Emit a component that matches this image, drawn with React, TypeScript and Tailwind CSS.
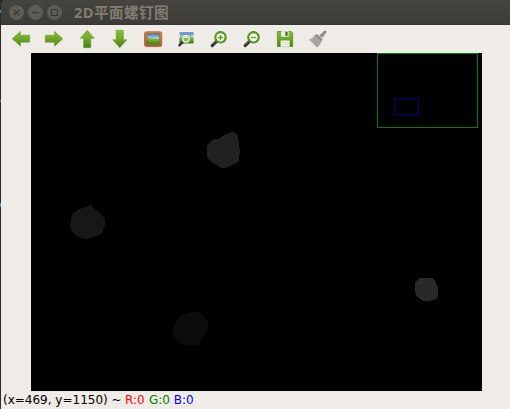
import type { ReactNode } from "react";

function Icon({ children }: { children: ReactNode }) {
  return (
    <svg width="24" height="24" viewBox="0 0 24 24" fill="none" className="shrink-0">
      {children}
    </svg>
  );
}

function Arrow({ d }: { d: string }) {
  return (
    <Icon>
      <path d={d} fill="url(#leaf)" stroke="#659b25" strokeWidth="0.5" strokeLinejoin="round" />
    </Icon>
  );
}

function Magnifier({ plus }: { plus?: boolean }) {
  return (
    <Icon>
      <path d="M10 13.8 5.2 18.6" stroke="#34362f" strokeWidth="3.1" strokeLinecap="round" />
      <path d="M8.8 14.2 5.6 17.4" stroke="#777970" strokeWidth="0.8" />
      <circle cx="13.5" cy="10.3" r="5.2" fill="#f5f8ef" stroke="#4b8a13" strokeWidth="2.1" />
      <circle cx="13.5" cy="10.3" r="5.2" stroke="#68a42b" strokeWidth="0.8" />
      <path d={plus ? "M11 10.5h5M13.5 8v5" : "M11 10.5h5"} stroke="#5f9e22" strokeWidth="1.3" />
    </Icon>
  );
}

function WindowButton({ d }: { d: string }) {
  return (
    <span className="flex size-[15px] items-center justify-center rounded-full bg-[#5e5c57]">
      <svg width="15" height="15" viewBox="0 0 15 15" fill="none" stroke="#393834" strokeWidth="1.1">
        <path d={d} />
      </svg>
    </span>
  );
}

function TitleBar() {
  return (
    <header className="flex h-[25px] items-center rounded-tl-[5px] border-b border-[#393733] bg-linear-to-b from-[#45443f] to-[#3c3b37] pl-2">
      <div className="flex gap-1">
        <WindowButton d="m5 5 5 5m0-5-5 5" />
        <WindowButton d="M4 7.5h7" />
        <WindowButton d="M4.5 4.5h6v6h-6z" />
      </div>
      <h1 className="ml-[12px] whitespace-nowrap font-['Open_Sans','Noto_Sans_CJK_SC',sans-serif] text-[14.6px] leading-6 font-bold tracking-[0.4px] text-[#817d74]">
        2D平面螺钉图
      </h1>
    </header>
  );
}

function Toolbar() {
  return (
    <nav className="flex h-7 items-center gap-[9px] pl-2">
      <svg width="0" height="0" className="absolute">
        <defs>
          <linearGradient id="leaf" x1="0" y1="3" x2="0" y2="21" gradientUnits="userSpaceOnUse">
            <stop stopColor="#8cbb3d" />
            <stop offset=".45" stopColor="#73a92c" />
            <stop offset="1" stopColor="#417c0b" />
          </linearGradient>
          <linearGradient id="sky" x1="0" y1="0" x2="0" y2="1">
            <stop stopColor="#4b7fc2" />
            <stop offset=".45" stopColor="#bcd5e9" />
            <stop offset="1" stopColor="#bcd5e9" />
          </linearGradient>
          <linearGradient id="hill" x1="0" y1="0" x2="0" y2="1">
            <stop stopColor="#8dbd4a" />
            <stop offset="1" stopColor="#3f7f0a" />
          </linearGradient>
          <linearGradient id="wood" x1="0" y1="0" x2="0" y2="1">
            <stop stopColor="#d18a52" />
            <stop offset="1" stopColor="#b35f25" />
          </linearGradient>
        </defs>
      </svg>
      <Arrow d="M3.2 11.8 11.5 4.3V8.2H20.7V15.3H11.5V19.3Z" />
      <Arrow d="M20.8 11.8 12.5 4.3V8.2H3.3V15.3H12.5V19.3Z" />
      <Arrow d="M12.2 3.2 19.3 11.3H15.8V20.7H8.6V11.3H5.1Z" />
      <Arrow d="M11.8 20.8 4.7 12.7H8.2V3.3H15.4V12.7H18.9Z" />
      <Icon>
        <rect x="3.5" y="4.8" width="17.2" height="14.8" rx="1.8" fill="url(#wood)" stroke="#a65522" strokeWidth=".7" />
        <rect x="6" y="6.8" width="12.6" height="10.8" fill="url(#sky)" />
        <path d="M6 11.2c3-.5 5 1 12.6.2v6.2H6Z" fill="url(#hill)" />
        <rect x="6" y="6.8" width="12.6" height="10.8" stroke="#79451d" strokeOpacity=".7" strokeWidth=".6" />
      </Icon>
      <Icon>
        <rect x="4.6" y="4.4" width="15.8" height="13" fill="#fbfbfa" />
        <rect x="5.4" y="5.2" width="14.2" height="11.2" fill="url(#sky)" />
        <path d="M5.4 10.3c5-.6 8 .8 14.2 0v6.1H5.4Z" fill="url(#hill)" />
        <path d="M8.6 15 5.6 18.2" stroke="#393b35" strokeWidth="2.7" strokeLinecap="round" />
        <circle cx="12" cy="11.8" r="4.5" fill="#4b8a17" />
        <circle cx="12" cy="11.8" r="3.3" fill="#8fbb60" stroke="#f7faf2" strokeWidth="1.3" />
        <path d="M9.7 10.9c.4-1 1.3-1.5 2.3-1.5s1.9.5 2.3 1.5Z" fill="#dce9e2" />
      </Icon>
      <Magnifier plus />
      <Magnifier />
      <Icon>
        <path d="M4.4 4.5H18.3L19.7 6V19.6H4.4Z" fill="url(#leaf)" stroke="#4e8b16" strokeWidth=".7" />
        <path d="M8.2 4.2h7.4v5.6H8.2ZM7.6 13.6h9v6.1h-9Z" fill="#f0f1ea" />
        <path d="M12.3 4.8h2.3v4.1h-2.3Z" fill="#3f770f" />
        <path d="M9 15.5h6.3M9 17.5h6.3" stroke="#d8dbd3" strokeWidth=".7" />
      </Icon>
      <Icon>
        <path d="m13.2 8.4 5.6-5.1 2 1.8-4.6 5.8Z" fill="#8f8f8c" />
        <path d="M11 7.2 16.6 12.6l-1.3 2-6.6-6.4Z" fill="#858582" />
        <path d="M8.7 8c-.8 2-2.7 3.5-5.6 4.5l7.8 8.1c2-1.6 3.8-3.6 4.4-6.1Z" fill="#a5a4a1" />
        <path d="m8.8 10.4-3 2.7M11 12.5l-2.6 3.4M13.1 14.6l-2.5 3.8" stroke="#b0afab" strokeWidth=".5" />
      </Icon>
    </nav>
  );
}

function Viewport() {
  return (
    <main className="relative ml-[30px] h-[338px] w-[451px] bg-black">
      <svg width="451" height="338" viewBox="31 53 451 338" shapeRendering="crispEdges" className="block">
        <path d="M232 131.5 235 133 238 136 239 146 240 149 239 160 236 163 231 165.5 227 167.5H221L215 164 210 161 207 158V145L211 141 215 139H218L224 135.5Z" fill="#212121" />
        <path d="M91.5 205 94 209 98 211 101 214 105.5 219 105 225 103 231 99 235 93 237 86 239 78 237 73 233 70 227 71 219 73 213 80 209Z" fill="#171717" />
        <path d="M192 312H200L204 317 209 323 207 331 202 339 198 345H184L177 341 172 333 175 323 180 316 187 313Z" fill="#0c0c0c" />
        <path d="M420 278H432L435 281 437 285 438.5 291 438 297 434 300 428 301H424L417 297 415 292V282Z" fill="#292929" />
      </svg>
      <div className="absolute top-0 right-1 h-[75px] w-[101px] border border-[#008000]">
        <div className="absolute top-[44px] left-4 h-[18px] w-[25px] border border-[#000080]" />
      </div>
    </main>
  );
}

/* One-pixel strip of the desktop showing beside the window. */
function DesktopEdge() {
  return (
    <div className="flex w-px shrink-0 flex-col bg-[#2c292d]">
      <div className="mt-[10px] h-[3px] bg-[#527aa8]" />
      <div className="mt-[87px] h-[2px] bg-[#647c9c]" />
      <div className="mt-[101px] h-[4px] bg-[#638da2]" />
    </div>
  );
}

export default function App() {
  return (
    <div className="flex h-[409px] w-[510px] overflow-hidden bg-[#2c292d]">
      <DesktopEdge />
      <div className="min-w-0 flex-1">
        <TitleBar />
        <div className="h-[384px] bg-[#efebe7]">
          <Toolbar />
          <Viewport />
          <footer className="flex h-[18px] items-center pl-[2px] font-['DejaVu_Sans',sans-serif] text-[12px] leading-[18px] whitespace-pre text-black">
            <span>(x=469, y=1150) ~</span>
            <span className="ml-[3.4px] text-[#ff0000]">R:0</span>
            <span className="ml-[4.3px] text-[#008000]">G:0</span>
            <span className="ml-[3.8px] text-[#0000ff]">B:0</span>
          </footer>
        </div>
      </div>
    </div>
  );
}
